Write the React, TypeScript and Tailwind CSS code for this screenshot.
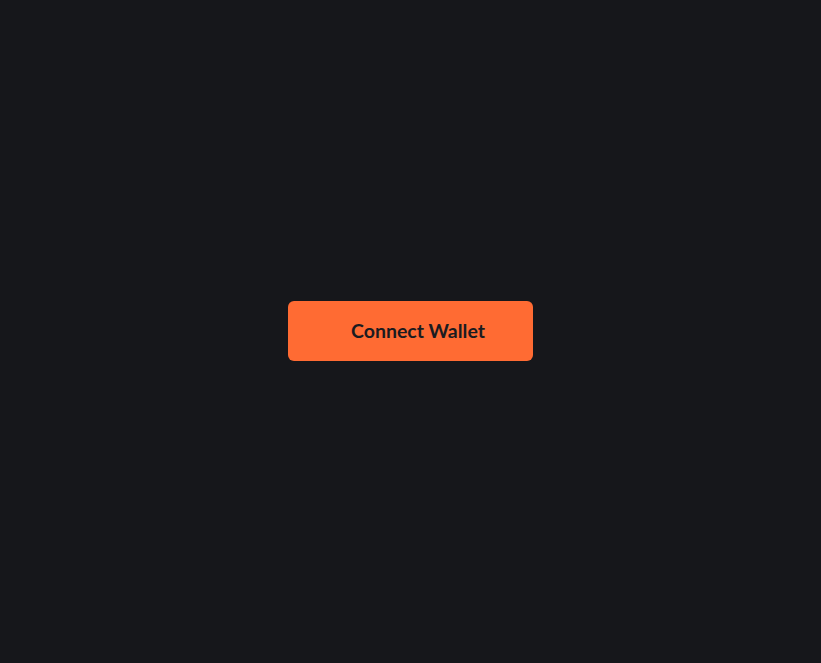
import React from 'react';

export default function App() {
  return (
    <div className="flex h-screen w-full items-center justify-center bg-[#16171b]">
      <button
        className="mb-[2px] flex h-[60px] w-[245px] items-center justify-center rounded-md bg-[#ff6b33] pl-[15px] text-[19.5px] font-bold text-[#1b1b20]"
        style={{ fontFamily: 'Lato, "Open Sans", sans-serif' }}
      >
        Connect Wallet
      </button>
    </div>
  );
}
